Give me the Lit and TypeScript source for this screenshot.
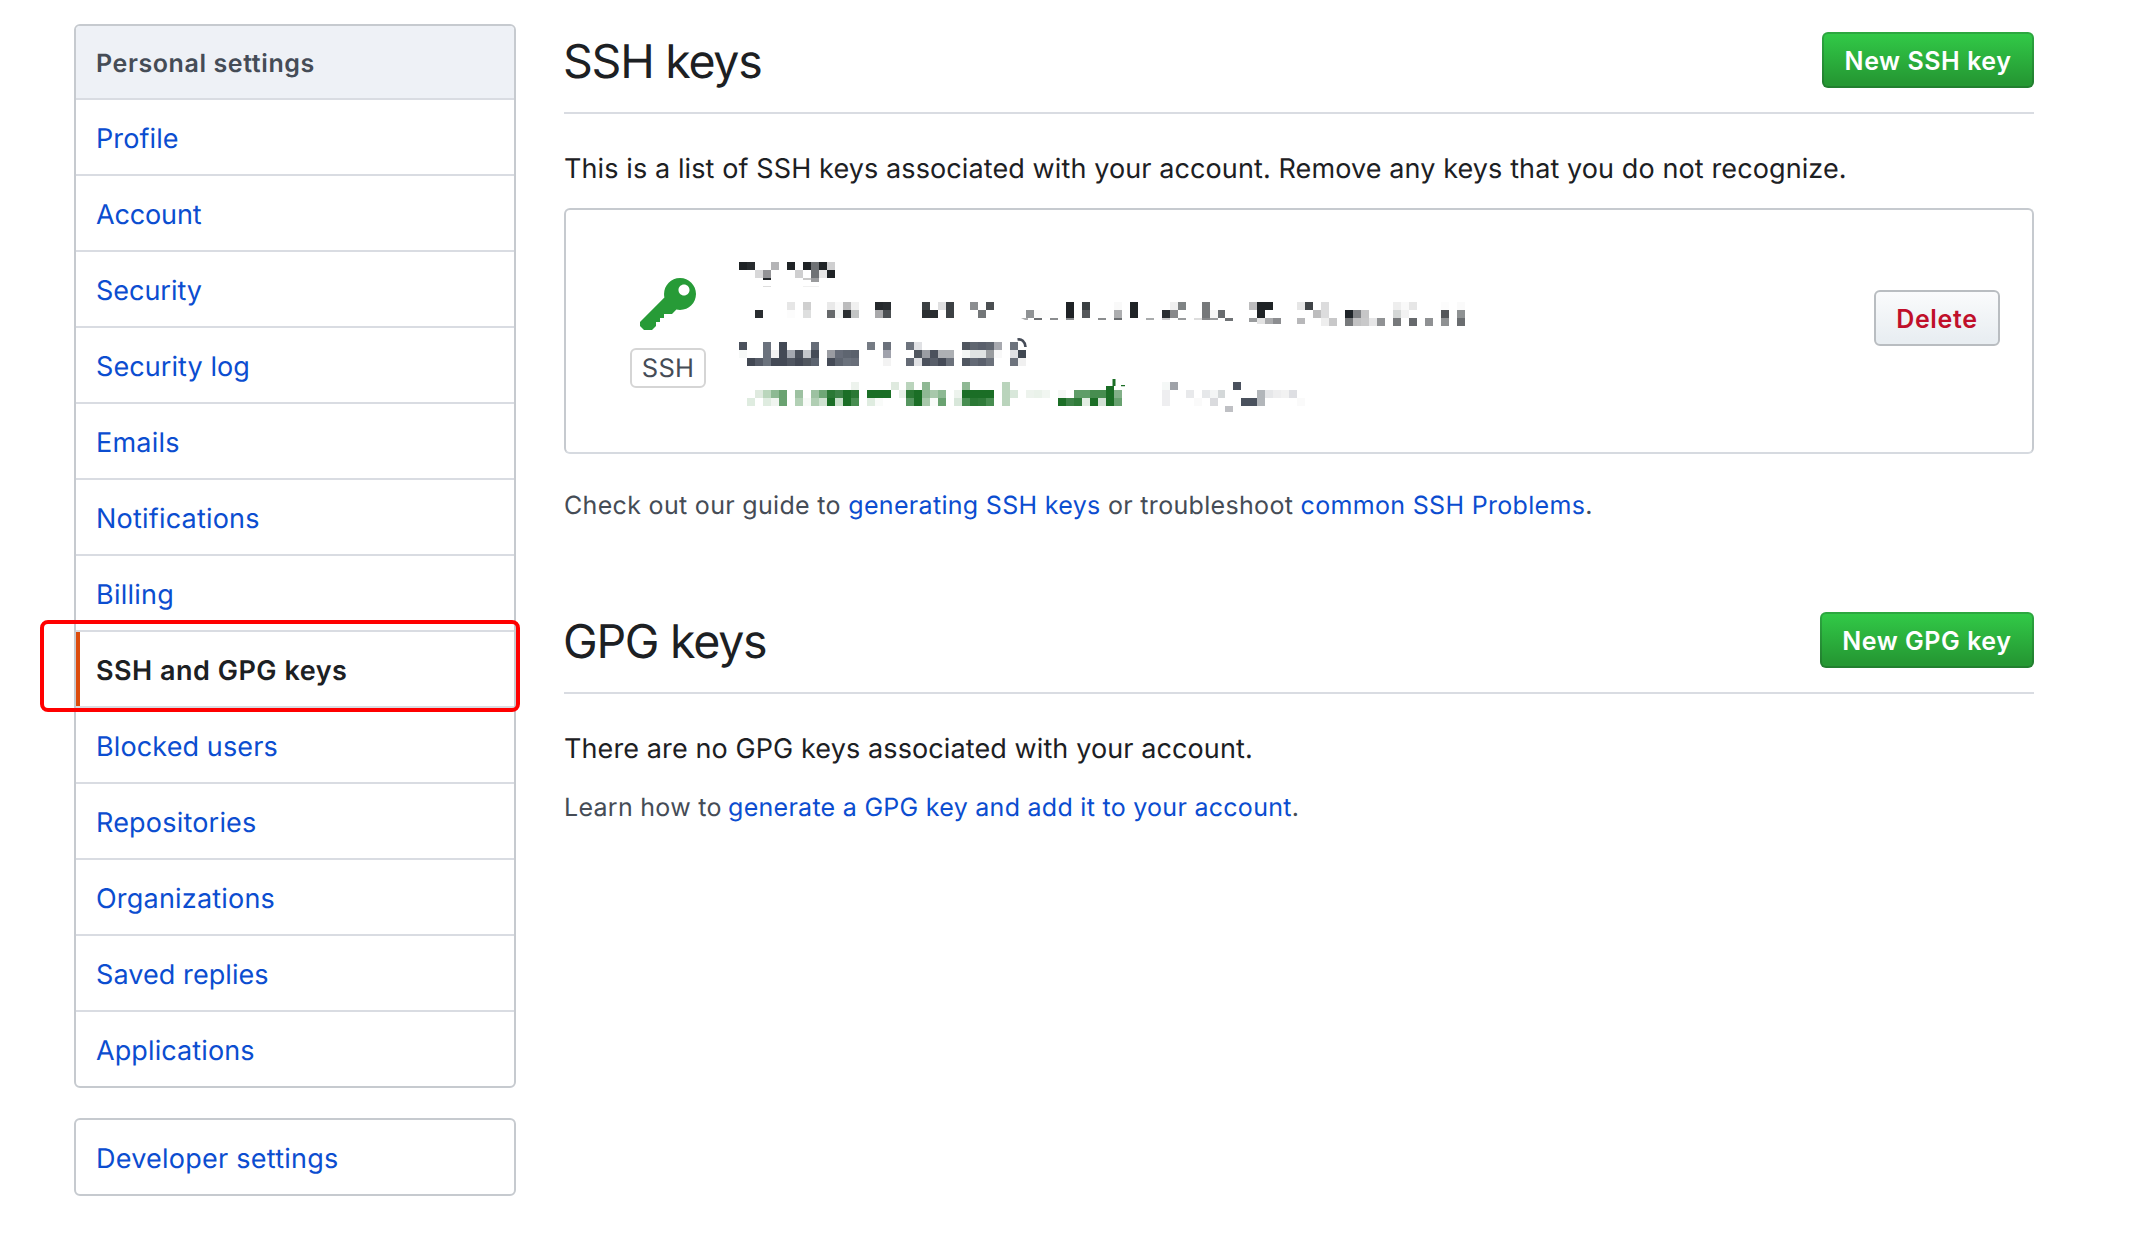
import { LitElement, html, css, svg } from "lit";
import { customElement, property } from "lit/decorators.js";
import { classMap } from "lit/directives/class-map.js";

interface NavItem {
  label: string;
  spacing: number;
  selected?: boolean;
}

const PERSONAL: NavItem[] = [
  { label: "Profile", spacing: 0.1 },
  { label: "Account", spacing: -0.14 },
  { label: "Security", spacing: -0.03 },
  { label: "Security log", spacing: 0.08 },
  { label: "Emails", spacing: 0.24 },
  { label: "Notifications", spacing: 0.2 },
  { label: "Billing", spacing: 0.24 },
  { label: "SSH and GPG keys", spacing: 0.5, selected: true },
  { label: "Blocked users", spacing: 0.12 },
  { label: "Repositories", spacing: 0.2 },
  { label: "Organizations", spacing: 0.2 },
  { label: "Saved replies", spacing: 0.08 },
  { label: "Applications", spacing: 0.1 },
];

/* Redacted key details: each band holds "column:colour[:height]" cells. */
const CELL = 7.975;
const REDACTED: { y: number; h: number; cells: string }[] = [
  { y: 0, h: 8, cells: "0:1f2326 1:272b2e 4:b4b4b6 6:1f2326 8:1f2326 9:6f7275 10:1f2326 11:cfcfd0" },
  { y: 8, h: 8, cells: "2:d8d8d9 3:939396 7:cfcfd0 9:6f7275 10:e6e6e6 11:1f2326" },
  { y: 16, h: 2, cells: "3:1f2326 8:c8c8c8 9:9a9b9d:4" },
  { y: 24, h: 1, cells: "3:dcdcdc 8:f0f0f0 9:f0f0f0" },

  { y: 40, h: 8, cells: "6:e6e6e6 8:cfcfcf 11:e9e9e9 12:f9f9f9 13:bbbbbc 14:f0f0f0 17:25292c 18:292d30 23:3c4043 25:dfdfe0 26:3c4043 29:8b8d90 31:4b4f52 41:1f2326 43:3a3f42 47:f9f9f9 49:1f2326 54:efefef 55:7f8384 58:76787a 64:bdbdbe 65:1f2326 66:1f2326 70:e6e6e6 71:404447 73:dcdcdd 82:eeeeee 83:f9f9f9 84:e6e6e6 88:fcfcfc 90:fafafa" },
  { y: 48, h: 8, cells: "2:292d30 6:fcfcfc 8:dedfdf 11:66696b 12:f4f6f5 13:2b2f32 14:c2c4c4 17:a9a9ab 18:4b4f52 23:2b2f32 24:292d30 26:3c4043 30:737678 36:8f9294 37:fafafa 38:fcfcfc 41:1f2326 43:55585b 47:adaeb0 49:1f2326 53:2a2e31 54:88898b 58:76787a 59:f5f5f5 60:696c6f 65:1f2326 72:bdbdbe 73:dcdcdd 76:1f2428 77:808285 78:c6c6c7 82:d4d7d6 83:f2f2f2 88:55575a 90:8f9293" },
  { y: 56, h: 2, cells: "37:6a6d70 39:8b8d8f 41:8b8d8f 45:8b8d8f 47:6a6d70 51:a9abac 53:cccccc 55:999b9d 57:dddddd 58:88898b 59:999b9d 61:6f7275:3 64:999b9d:4 65:e3e3e3:6 66:aaabad:6 67:8c8d90:6 70:b8b8ba:6 73:eeeeee:8 74:c8c8c9:8 76:77797b:8 77:c2c2c3:8 78:c9c9ca:8 79:e6e6e7:8 80:909294:8 82:77797b:8 84:66696c:8 86:8f9193:8 88:8f9193:8 90:6a6d70:8" },

  { y: 80, h: 8, cells: "0:4b515c 3:6b727d 5:434955 9:656c77 16:757b84 18:6b717b 21:6d737d 22:e0e1e4 28:50565f 29:606670 30:5a606c 31:606670 32:a7a9af 34:6d737d" },
  { y: 88, h: 8, cells: "0:f7f9f8 3:6b727d 4:f2f2f2 5:434955 6:a4a8b0 7:4b515c 8:c4c7cb 9:454b57 11:9a9ca2 12:666c78 13:5e6570 14:5a616c 18:a0a2ac 22:50565f 23:9a9da3 24:4b515c 25:adb0b4 26:adb0b4 28:f3f6f5 29:e0e3e3 30:e0e3e3 31:999c9f 32:f8f8f8 34:e0e1e4 35:404751" },
  { y: 96, h: 8, cells: "1:424853 2:565c68 3:6b727d 4:434955 5:434955 6:505661 7:434955 8:50565f 9:5c636f 11:454b57 12:5e6570 13:6b727d 14:686e79 18:f3f3f3 21:646a75 22:e0e1e4 23:4b515c 24:585e69 25:454b57 26:6b717b 28:505761 29:636975 30:5a606c 31:6b717b 34:6d737d 35:f0f0f0" },

  { y: 120, h: 8, cells: "14:edf3ed 19:dfeadf 21:bad4bc 23:8fb894 28:8fb894 33:bad4bc 53:f5f8f7 54:9fa2a8 62:4a515d" },
  { y: 128, h: 8, cells: "2:dfeadf 3:bad6bc 4:8db993 5:6aa271 7:9dc1a1 9:9dc1a1 10:6fa776 11:2a7834 12:3c8246 13:1b6e26 14:2a7834 16:1b6e26 17:1b6e26 18:1b6e26 20:e9f1e9 21:2a7834 22:1b6e26 23:8fb894 24:a8c8ab 25:8db993 27:edf3ed 28:1b6e26 29:1b6e26 30:1b6e26 31:1b6e26 33:bad4bc 34:d8e7da 36:edf3ed 37:eaf2ea 38:f1f6f1 40:f5f8f5 42:5f9d68 43:5f9d68 44:478d50 45:478d50 46:1b6e26 47:82b088 53:eeeef0 56:e8e9eb 58:e6e8ea 59:f3f5f5 60:d4d8d9 65:b2b6ba 66:e6e7e9 67:eeeeef 68:f2f2f2 69:dedfe3" },
  { y: 136, h: 8, cells: "1:dfece0 3:dfece0 4:f0f5f0 5:6aa271 7:b2d0b5 8:f7faf7 9:b0ceb3 10:cfe2d1 11:1b6e26 12:c8dfca 13:1b6e26 14:478d50 16:dfece0 17:f9fbf9 21:569660 22:1b6e26 23:a8c8ab 24:f9fbf9 25:6aa271 27:d8e7da 28:478d50 29:2a7834 30:2f7b39 31:478d50 33:bad4bc 40:1b6e26 41:3c8246 42:2f7b39 43:e2ede3 44:1b6e26 45:d2e0d4 46:1b6e26 47:67a16f 53:eeeef0 57:fafafa 59:dadbde 63:4a515d 64:4a515d 65:b2b6ba 70:fafafa" },
  { y: 144, h: 6, cells: "61:bfc0c4" },
];

const redactedCells = REDACTED.flatMap(({ y, h, cells }) =>
  cells.split(" ").map((cell) => {
    const [col, fill, height] = cell.split(":");
    const x = Math.round(Number(col) * CELL);
    const next = Math.round((Number(col) + 1) * CELL);
    return { x, y, w: next - x, h: height ? Number(height) : h, fill: "#" + fill };
  })
);

@customElement("settings-menu")
export class SettingsMenu extends LitElement {
  @property() heading = "";
  @property({ attribute: false }) items: NavItem[] = [];

  static styles = css`
    :host { display: block; }
    .menu {
      border: 2px solid #c6cacf;
      border-radius: 6px;
      overflow: hidden;
      background: #fff;
    }
    .heading, .item {
      display: flex;
      align-items: center;
      box-sizing: border-box;
      padding: 2px 20px 0 20px;
      border-bottom: 2px solid #d9dce2;
      white-space: nowrap;
    }
    .heading {
      height: 74px;
      padding-top: 3px;
      background: #eef1f6;
      color: #454c56;
      font-size: 25px;
      font-weight: 600;
      letter-spacing: 0.6px;
    }
    .item {
      height: 76px;
      color: #0b4dd0;
      font-size: 27px;
      text-decoration: none;
    }
    .item:last-child { border-bottom: 0; height: 74px; }
    .selected {
      color: #1c2023;
      font-weight: 600;
      border-left: 4px solid #dc4c0c;
      padding-left: 16px;
      /* keeps the accent bar square against the divider */
      border-bottom: 0;
      height: 74px;
      box-shadow: 0 2px 0 #d9dce2;
      margin-bottom: 2px;
    }
  `;

  render() {
    return html`
      <nav class="menu">
        ${this.heading ? html`<div class="heading">${this.heading}</div>` : null}
        ${this.items.map(
          (item) => html`<a
            class=${classMap({ item: true, selected: !!item.selected })}
            style="letter-spacing:${item.spacing}px"
            >${item.label}</a
          >`
        )}
      </nav>
    `;
  }
}

@customElement("section-head")
export class SectionHead extends LitElement {
  @property() heading = "";
  @property() action = "";

  static styles = css`
    :host {
      display: flex;
      justify-content: space-between;
      align-items: flex-start;
      box-sizing: border-box;
      height: 90px;
      border-bottom: 2px solid #d9dce2;
    }
    .title {
      margin: 2px 0 0 -1px;
      font-size: 46.5px;
      font-weight: 400;
      line-height: 72px;
      letter-spacing: -1.27px;
    }
    .button {
      box-sizing: border-box;
      height: 56px;
      margin: 8px 0 0;
      padding: 2px 20.5px 0 20.5px;
      border: 2px solid rgba(27, 31, 35, 0.2);
      border-radius: 6px;
      background: linear-gradient(180deg, #32cb48, #259833 90%) border-box;
      color: #fff;
      font: inherit;
      font-size: 25px;
      font-weight: 600;
      line-height: 50px;
      letter-spacing: 0.55px;
    }
  `;

  render() {
    return html`
      <h2 class="title">${this.heading}</h2>
      <button class="button">${this.action}</button>
    `;
  }
}

@customElement("ssh-key-card")
export class SshKeyCard extends LitElement {
  static styles = css`
    :host {
      display: flex;
      align-items: flex-start;
      box-sizing: border-box;
      height: 246px;
      border: 2px solid #c6cacf;
      border-bottom-color: #d6dae0;
      border-radius: 6px;
    }
    .kind {
      display: flex;
      flex-direction: column;
      align-items: center;
      gap: 10px;
      width: 76px;
      margin: 64px 33px 0 64px;
    }
    .key { display: block; width: 56px; height: 64px; fill: #279b37; }
    .badge {
      box-sizing: border-box;
      width: 76px;
      height: 40px;
      border: 2px solid #d5d5d5;
      border-radius: 6px;
      color: #454c56;
      font-size: 25.5px;
      line-height: 38px;
      letter-spacing: 0.2px;
      text-align: center;
    }
    .details { display: block; width: 730px; height: 152px; margin-top: 52px; }
    .delete {
      box-sizing: border-box;
      width: 126px;
      height: 56px;
      margin: 80px 32px 0 auto;
      padding: 2px 0 0;
      border: 2px solid #b9bdc1;
      border-radius: 6px;
      background: linear-gradient(180deg, #fafbfc, #e9eef2 90%);
      color: #c00f2a;
      font: inherit;
      font-size: 25px;
      font-weight: 600;
      line-height: 50px;
      letter-spacing: 0.7px;
    }
  `;

  render() {
    return html`
      <div class="kind">
        <svg class="key" viewBox="0 0 14 16">
          <path fill-rule="evenodd" d="M12.83 2.17C12.08 1.42 11.14 1.03 10 1c-1.13.03-2.08.42-2.83 1.17S6.04 3.86 6.01 5c0 .3.03.59.09.89L0 12v1l1 1h2l1-1v-1h1v-1h1v-1h2l1.09-1.11c.3.08.59.11.91.11 1.14-.03 2.08-.42 2.83-1.17S13.97 6.14 14 5c-.03-1.14-.42-2.08-1.17-2.83zM11 5.38c-.77 0-1.38-.61-1.38-1.38 0-.77.61-1.38 1.38-1.38.77 0 1.38.61 1.38 1.38 0 .77-.61 1.38-1.38 1.38z"></path>
        </svg>
        <span class="badge">SSH</span>
      </div>
      <svg class="details" viewBox="0 0 730 152">
        ${redactedCells.map(
          (c) => svg`<rect x=${c.x} y=${c.y} width=${c.w} height=${c.h} fill=${c.fill}></rect>`
        )}
        <path d="M278.5 77.5c4-.8 7.500 1.500 8 7.500" fill="none" stroke="#454b57" stroke-width="2.600"></path>
        <path d="M373.500 117h3v7h-3zM382 123h4v1.200h-4zM367 124h8v4h-8z" fill="#1b6e26"></path>
        <path d="M282 56h7v2h-3z" fill="#aaabad"></path>
      </svg>
      <button class="delete">Delete</button>
    `;
  }
}

@customElement("app-root")
export class AppRoot extends LitElement {
  static styles = css`
    :host {
      display: block;
      box-sizing: border-box;
      min-height: 1238px;
      background: #fff;
      color: #1c2023;
      font-family: Inter, "Liberation Sans", sans-serif;
      text-rendering: geometricPrecision;
    }
    .page {
      display: flex;
      gap: 48px;
      padding: 24px 102px 0 74px;
    }
    .sidebar {
      position: relative;
      display: flex;
      flex: none;
      flex-direction: column;
      gap: 30px;
      width: 442px;
    }
    .highlight {
      position: absolute;
      left: -34px;
      top: 596px;
      box-sizing: border-box;
      width: 480px;
      height: 92px;
      border: 4px solid #ff0000;
      border-radius: 8px;
      pointer-events: none;
    }
    .main { flex: 1; min-width: 0; }
    .lead {
      margin: 34px 0 0;
      font-size: 27px;
      line-height: 42px;
      letter-spacing: 0.105px;
      white-space: nowrap;
    }
    .note {
      margin: 18px 0 0;
      color: #454c56;
      font-size: 25px;
      line-height: 40px;
      letter-spacing: 0.32px;
      white-space: nowrap;
    }
    .note a { color: #0b4dd0; }
    .card { margin-top: 18px; }
    .guide { margin: 32px 0 78px; }
    .learn { letter-spacing: 0.28px; }
    .learn a { margin-left: -1px; }
  `;

  render() {
    return html`
      <div class="page">
        <aside class="sidebar">
          <settings-menu heading="Personal settings" .items=${PERSONAL}></settings-menu>
          <settings-menu .items=${[{ label: "Developer settings", spacing: 0.24 }]}></settings-menu>
          <div class="highlight"></div>
        </aside>
        <main class="main">
          <section-head heading="SSH keys" action="New SSH key"></section-head>
          <p class="lead">This is a list of SSH keys associated with your account. Remove any keys that you do not recognize.</p>
          <ssh-key-card class="card"></ssh-key-card>
          <p class="note guide">Check out our guide to <a>generating SSH keys</a> or troubleshoot <a>common SSH Problems</a>.</p>
          <section-head heading="GPG keys" action="New GPG key"></section-head>
          <p class="lead">There are no GPG keys associated with your account.</p>
          <p class="note learn">Learn how to <a>generate a GPG key and add it to your account</a>.</p>
        </main>
      </div>
    `;
  }
}
